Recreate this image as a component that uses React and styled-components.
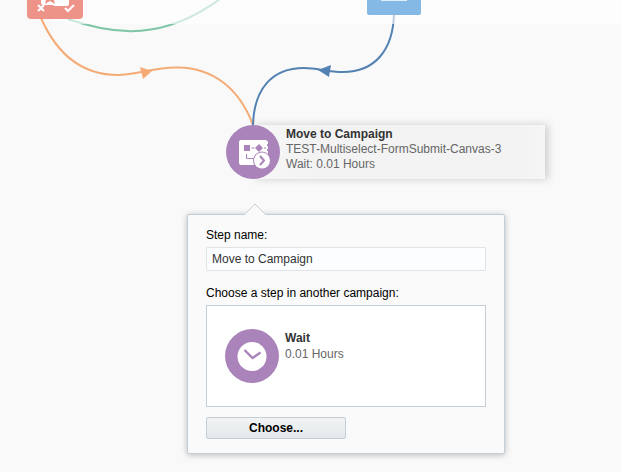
import React from 'react';
import styled, { createGlobalStyle } from 'styled-components';

const GlobalStyle = createGlobalStyle`
  * {
    box-sizing: border-box;
  }
  body {
    margin: 0;
    background: #f9f9f9;
    color: #000;
    font-family: 'Liberation Sans', Arial, sans-serif;
    font-size: 12px;
    line-height: 15px;
  }
`;

const Canvas = styled.main`
  position: relative;
  min-height: 100vh;
  overflow: hidden;
`;

const Connectors = styled.svg`
  position: absolute;
  top: 0;
  left: 0;
  overflow: visible;
`;

const NodeLabelFade = styled.div`
  position: absolute;
  top: 0;
  left: 54px;
  right: 0;
  height: 24px;
  background: linear-gradient(to right, rgba(255, 255, 255, 0.3), rgba(255, 255, 255, 0.6) 20px);
`;

const Tile = styled.svg`
  position: absolute;
  top: 0;
  left: ${props => props.$left}px;
`;

const StepNode = styled.div`
  position: absolute;
  top: 125px;
  left: 226px;
  display: flex;
`;

const StepCard = styled.div`
  width: 292px;
  height: 54px;
  margin-left: -27px;
  padding: 2px 0 0 33px;
  color: #666;
  background: linear-gradient(to right, #f7f7f7, #f3f3f3 60px, #f3f3f3 270px, #f6f6f6);
  box-shadow: 3px 0 8px rgba(0, 0, 0, 0.18);
`;

const CircleIcon = styled.svg`
  position: relative;
  z-index: 1;
  flex: none;
`;

const Name = styled.div`
  color: #333;
  font-weight: bold;
`;

const Popup = styled.form`
  position: absolute;
  top: 214px;
  left: 187px;
  width: 318px;
  padding: 12px 18px 14px;
  display: flex;
  flex-direction: column;
  align-items: stretch;
  background: #fafafa;
  border: 1px solid #c4ced7;
  border-radius: 2px;
  box-shadow: 0 1px 6px rgba(0, 0, 0, 0.25);
`;

const Caret = styled.svg`
  position: absolute;
  top: -12px;
  left: 56px;
`;

const Label = styled.label`
  line-height: 16px;
`;

const TextInput = styled.input`
  height: 24px;
  margin: 4px 0 14px;
  padding: 0 5px;
  color: #333;
  font: inherit;
  background: #fcfdfe;
  border: 1px solid #dfe4e7;
  border-radius: 1px;
`;

const StepPicker = styled.div`
  height: 102px;
  margin: 4px 0 10px;
  padding: 23px 18px;
  display: flex;
  gap: 6px;
  color: #666;
  line-height: 16px;
  background: #fff;
  border: 1px solid #c4ced7;
`;

const PickedStep = styled.div`
  padding-top: 1px;
`;

const ChooseButton = styled.button`
  align-self: flex-start;
  width: 140px;
  height: 22px;
  padding: 0;
  color: #000;
  font: inherit;
  font-weight: bold;
  background: linear-gradient(#f1f3f4, #e4e8ea);
  border: 1px solid #c4ced7;
  border-radius: 2px;
`;

const CampaignIcon = () => (
  <CircleIcon width="54" height="54" viewBox="0 0 54 54" aria-hidden="true">
    <circle cx="27" cy="27" r="27" fill="#a983b9" />
    <path
      d="M15 15H39Q42 15 42 18V19H41V21H42V24H41V26H42V40H15Q13 40 13 38V17Q13 15 15 15Z"
      fill="#fff"
    />
    <path d="M18 20h6v6h-6zM33 19l4 4-4 4-4-4z" fill="#a983b9" />
    <path d="M25.500 23h3M38 23h2M20.500 29v4.500h8" fill="none" stroke="#a983b9" />
    <circle cx="36" cy="35.500" r="9" fill="#a983b9" />
    <circle cx="36" cy="35.500" r="8" fill="#fff" />
    <path d="M34 31l4 4.500-4 4.500" fill="none" stroke="#a983b9" strokeWidth="2" />
  </CircleIcon>
);

const WaitIcon = () => (
  <CircleIcon width="54" height="54" viewBox="0 0 54 54" aria-hidden="true">
    <circle cx="27" cy="27" r="27" fill="#a983b9" />
    <circle cx="27" cy="27.500" r="14.500" fill="#fff" />
    <path d="M19.500 21l8 8 8-5.500" fill="none" stroke="#a983b9" strokeWidth="2.400" />
  </CircleIcon>
);

const App = () => (
  <>
    <GlobalStyle />
    <Canvas>
      <Connectors width="621" height="200" fill="none" strokeWidth="2" aria-hidden="true">
        <path d="M68 19C116 36 164 40 220 -1" stroke="#7fc6a8" />
        <path d="M41 18C56 52 80 75 118 75C137 75 154 67 178 67.500C213 68 239 88 253 125" stroke="#f4ab76" />
        <path d="M140 67L152 71L143 79Z" fill="#f4ab76" />
        <path d="M394 14C393 50 375 72 343 72C327 72 318 68 304 68C271 68 254 90 253 125" stroke="#5382b2" />
        <path d="M318 70L331 65L329 77Z" fill="#5382b2" />
      </Connectors>
      <NodeLabelFade />
      <Tile $left={27} width="56" height="19" aria-hidden="true">
        <path d="M0 0H56V15Q56 19 52 19H4Q0 19 0 15Z" fill="#ed9388" />
        <path d="M14 0H42V4Q42 6 40 6H27L26 5H16Q14 5 14 3Z" fill="#fff" />
        <path d="M19 0H27L28 4L23 1L18 4Z" fill="#ed9388" />
        <path d="M11 5l6 6M17 5l-6 6M38 8l3 3 6-6" fill="none" stroke="#fff" strokeWidth="2" />
      </Tile>
      <Tile $left={367} width="54" height="15" aria-hidden="true">
        <path d="M0 0H54V13Q54 15 52 15H2Q0 15 0 13Z" fill="#84b9e6" />
        <path d="M14 0H40V1H14Z" fill="#e3effa" />
      </Tile>

      <StepNode>
        <CampaignIcon />
        <StepCard>
          <Name>Move to Campaign</Name>
          <div>TEST-Multiselect-FormSubmit-Canvas-3</div>
          <div>Wait: 0.01 Hours</div>
        </StepCard>
      </StepNode>

      <Popup onSubmit={e => e.preventDefault()}>
        <Caret width="22" height="13" aria-hidden="true">
          <path d="M0 13V12L11 1L22 12V13Z" fill="#fafafa" />
          <path d="M0 12L11 1L22 12" fill="none" stroke="#c4ced7" />
        </Caret>
        <Label htmlFor="step-name">Step name:</Label>
        <TextInput id="step-name" type="text" defaultValue="Move to Campaign" />
        <Label as="div" id="step-picker-label">
          Choose a step in another campaign:
        </Label>
        <StepPicker role="group" aria-labelledby="step-picker-label">
          <WaitIcon />
          <PickedStep>
            <Name>Wait</Name>
            <div>0.01 Hours</div>
          </PickedStep>
        </StepPicker>
        <ChooseButton type="button">Choose...</ChooseButton>
      </Popup>
    </Canvas>
  </>
);

export default App;
